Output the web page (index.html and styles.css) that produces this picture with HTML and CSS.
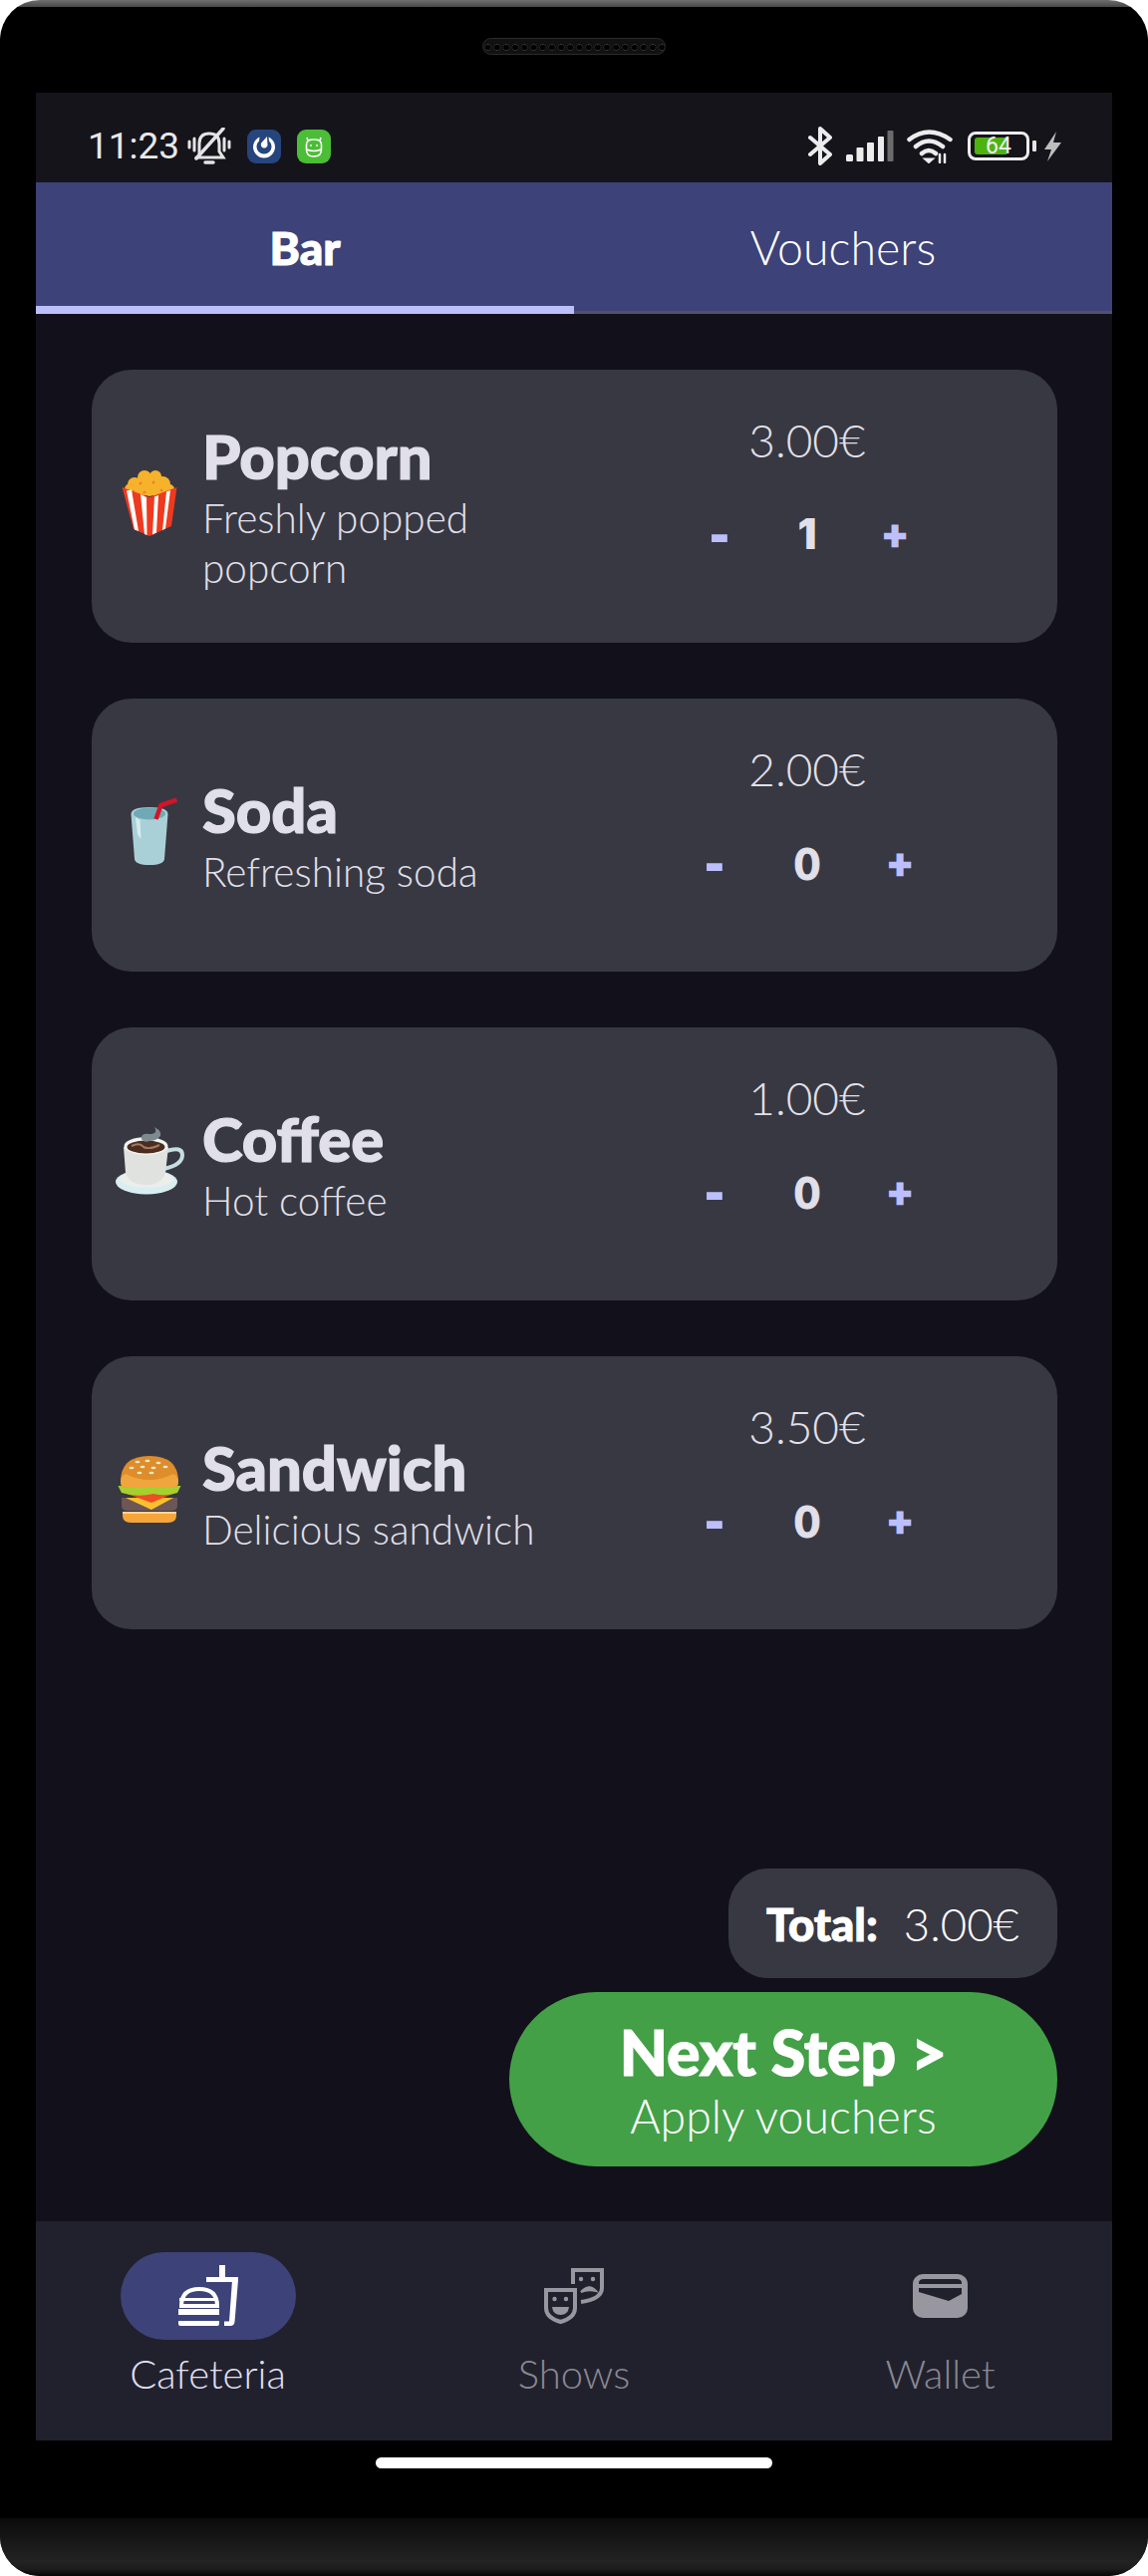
FILE: index.html
```html
<!DOCTYPE html>
<html lang="en">
<head>
<meta charset="utf-8">
<title>Cafeteria</title>
<link rel="stylesheet" href="styles.css">
</head>
<body>
<div class="device">
  <div class="bezel-top"><div class="speaker"></div></div>
  <div class="screen">
    <div class="status">
      <span class="time">11:23</span>
      <svg class="ic-bell" viewBox="0 0 44 38" fill="none" stroke="#e4e4e4" stroke-linecap="round" stroke-width="3"><path d="M12 28V16Q12 6 22 6Q32 6 32 16V24L36 30H9"/><path d="M9 31L36 1" stroke-width="3.5"/><path d="M2 14V20M7 11V23M37 11V23M42 14V20"/><path d="M18 35H26" stroke-width="3.5"/></svg>
      <svg class="ic-app ic-matter" viewBox="0 0 34 34"><rect width="34" height="34" rx="9" fill="#26457d"/><path d="M12.5 7.5A11 11 0 1 0 21.5 7.5L22 11.5A7.5 7.5 0 1 1 12 11.5Z" fill="#fff"/><path d="M20 7L20.5 16A3.4 3.4 0 1 1 14.6 13Z" fill="#fff"/></svg>
      <svg class="ic-app ic-green" viewBox="0 0 34 34"><rect width="34" height="34" rx="9" fill="#4cbd36"/><g fill="none" stroke="#fff" stroke-width="1.6"><path d="M9.5 15Q9.500 10 17 10Q24.500 10 24.500 15V20Q24.500 27 17 27Q9.500 27 9.500 20Z"/><path d="M9.500 20Q17 23 24.500 20M11 11L10 8M23 11L24 8"/></g><circle cx="14" cy="16" r="1" fill="#fff"/><circle cx="20" cy="16" r="1" fill="#fff"/></svg>
      <span class="status-space"></span>
      <svg class="ic-bt" viewBox="0 0 24 39" fill="none" stroke="#ececec" stroke-width="4" stroke-linejoin="round" stroke-linecap="round"><path d="M2 11L22 28L12 37V2L22 11L2 28"/></svg>
      <svg class="ic-signal" viewBox="0 0 48 31"><rect x="0" y="24" width="7" height="7" rx="1.500" fill="#ececec"/><rect x="10.500" y="17" width="7" height="14" rx="1" fill="#ececec"/><rect x="21" y="12" width="7" height="19" rx="1" fill="#ececec"/><rect x="32" y="6" width="6" height="25" rx="1" fill="#ececec"/><rect x="41.500" y="0" width="6" height="31" rx="1" fill="#6b6b6b"/></svg>
      <svg class="ic-wifi" viewBox="0 0 46 35" fill="none" stroke="#ececec" stroke-width="4.500" stroke-linecap="round"><path d="M2.500 11Q22 -4 43.500 11M9 18Q22 7 36 18M15 25Q22 19 29 25"/><path d="M22 34L18 30.500H26Z" fill="#ececec" stroke-width="2"/><path d="M33 26V34M38 26V34" stroke-width="2.500"/></svg>
      <div class="battery">
        <span class="battery-fill"></span>
        <span class="battery-num">64</span>
      </div>
      <span class="battery-tip"></span>
      <svg class="ic-bolt" viewBox="0 0 19 30"><path d="M13 0L1 18H8L4 30L18 11H10Z" fill="#bdbdbd"/></svg>
    </div>
    <div class="tabs">
      <div class="tab tab-active">Bar</div>
      <div class="tab">Vouchers</div>
    </div>
    <main class="main">
      <section class="card">
        <div class="emoji">
          <svg viewBox="0 0 72 68">
            <g fill="#f7b22c"><circle cx="21" cy="15" r="7"/><circle cx="31" cy="8" r="7"/><circle cx="42" cy="7" r="6"/><circle cx="49" cy="15" r="8"/><circle cx="36" cy="17" r="10"/><circle cx="17" cy="20" r="6"/><circle cx="56" cy="20" r="5"/><circle cx="26" cy="22" r="7"/><circle cx="46" cy="23" r="7"/></g>
            <g fill="#e8862a"><circle cx="27" cy="14" r="1.500"/><circle cx="40" cy="13" r="1.500"/><circle cx="48" cy="21" r="1.500"/><circle cx="31" cy="23" r="1.500"/><circle cx="20" cy="22" r="1.200"/></g>
            <path d="M8.500 18L36 28L63.500 18L58 57L36 67L20 60Z" fill="#ee3a1f"/>
            <path d="M13 21.500L18 20.500L25 62L21 60.500ZM27 25L33 28L33.500 66L31 65ZM41 27.500L45 26L43 63.500L39 65.500ZM53 22.500L57 21L52 59.500L49 61Z" fill="#fff"/>
          </svg>
        </div>
        <div class="info">
          <h2 class="name">Popcorn</h2>
          <p class="desc">Freshly popped popcorn</p>
        </div>
        <div class="side">
          <div class="price">3.00€</div>
          <div class="qty-row">
            <span class="step step-minus">-</span><span class="qty qty-one">1</span><span class="step step-plus">+</span>
          </div>
        </div>
      </section>
      <section class="card">
        <div class="emoji">
          <svg viewBox="0 0 72 68">
            <path d="M17.500 16Q17.500 9 36 9Q54.500 9 54.500 16L51 61Q50 67 36 67Q22 67 21 61Z" fill="#a9d0d7"/>
            <ellipse cx="36" cy="15.500" rx="16" ry="6" fill="#70a9b6"/>
            <path d="M22 19Q25 21 26.500 22L27.500 41Q25 38 24 36Z" fill="#d6ecef"/>
            <path d="M42.500 21L47.500 7L63.500 1.500" fill="none" stroke="#d21429" stroke-width="4.500"/>
          </svg>
        </div>
        <div class="info">
          <h2 class="name">Soda</h2>
          <p class="desc">Refreshing soda</p>
        </div>
        <div class="side">
          <div class="price">2.00€</div>
          <div class="qty-row">
            <span class="step step-minus">-</span><span class="qty">0</span><span class="step step-plus">+</span>
          </div>
        </div>
      </section>
      <section class="card">
        <div class="emoji">
          <svg viewBox="0 0 72 68">
            <ellipse cx="33" cy="55" rx="31" ry="12.500" fill="#d9eef0"/>
            <ellipse cx="33" cy="52.500" rx="27" ry="8" fill="#eceeec"/>
            <path d="M53 24Q69 19 69 28Q69 38 50 42" fill="none" stroke="#c5dfe1" stroke-width="4"/>
            <path d="M10 20H55L52 46Q48 58 33 58Q16 58 12 46Z" fill="#e0e2e0"/>
            <ellipse cx="32.500" cy="19" rx="22" ry="9" fill="#f1f3f1"/>
            <ellipse cx="32.500" cy="20" rx="19" ry="6.500" fill="#4b2c20"/>
            <path d="M18 19Q26 15 30 20Q36 23 46 18" fill="none" stroke="#a5795f" stroke-width="2"/>
            <path d="M28 12Q27 6 36 7Q45 7 41 0Q50 5 46 10Q42 14 36 14Q30 16 28 12Z" fill="#7e8a8d"/>
          </svg>
        </div>
        <div class="info">
          <h2 class="name">Coffee</h2>
          <p class="desc">Hot coffee</p>
        </div>
        <div class="side">
          <div class="price">1.00€</div>
          <div class="qty-row">
            <span class="step step-minus">-</span><span class="qty">0</span><span class="step step-plus">+</span>
          </div>
        </div>
      </section>
      <section class="card">
        <div class="emoji">
          <svg viewBox="0 0 72 68">
            <path d="M9 56H63V60Q63 67 54 67H18Q9 67 9 60Z" fill="#f5a53a"/>
            <path d="M9 57H63" stroke="#fbd49a" stroke-width="2"/>
            <path d="M8 42H64V50Q64 55 58 55H14Q8 55 8 50Z" fill="#6d5656"/>
            <path d="M12 42H60L38 54Z" fill="#fbc02d"/>
            <path d="M8 36H64L38 47Z" fill="#ef4d23"/>
            <path d="M4.500 30L67.500 30L64 37Q52 41 40 38Q24 42 8 37Z" fill="#a5d02e"/>
            <path d="M7 26Q7 0 36 0Q65 0 65 26Q65 32 58 32H14Q7 32 7 26Z" fill="#dd8d2b"/>
            <path d="M7 26Q7 20 12 18Q36 30 60 18Q65 20 65 26Q65 32 58 32H14Q7 32 7 26Z" fill="#f0a63c"/>
            <g fill="#f5e7c4"><ellipse cx="24" cy="6" rx="2.500" ry="1.300"/><ellipse cx="34" cy="5" rx="2.500" ry="1.300"/><ellipse cx="45" cy="7" rx="2.500" ry="1.300"/><ellipse cx="18" cy="12" rx="2.500" ry="1.300"/><ellipse cx="29" cy="11" rx="2.500" ry="1.300"/><ellipse cx="40" cy="12" rx="2.500" ry="1.300"/><ellipse cx="52" cy="11" rx="2.500" ry="1.300"/><ellipse cx="26" cy="17" rx="2.500" ry="1.300"/><ellipse cx="38" cy="17" rx="2.500" ry="1.300"/></g>
          </svg>
        </div>
        <div class="info">
          <h2 class="name">Sandwich</h2>
          <p class="desc">Delicious sandwich</p>
        </div>
        <div class="side">
          <div class="price">3.50€</div>
          <div class="qty-row">
            <span class="step step-minus">-</span><span class="qty">0</span><span class="step step-plus">+</span>
          </div>
        </div>
      </section>
      <div class="footer">
        <div class="total"><strong class="total-label">Total:</strong><span class="total-value">3.00€</span></div>
        <button class="next" type="button">
          <span class="next-title">Next Step &gt;</span>
          <span class="next-sub">Apply vouchers</span>
        </button>
      </div>
    </main>
    <nav class="nav">
      <div class="nav-item nav-active">
        <div class="nav-icon">
          <svg class="ic-cafe" viewBox="0 0 60 62" fill="#fff">
            <rect x="41" y="0" width="6" height="13"/><rect x="28" y="12" width="32" height="5"/>
            <path d="M54 15H60L56.500 57Q56 61 52 61H46V56.500H51Z"/>
            <path d="M3 41Q3 24 21 24Q39 24 39 41Z" fill="none" stroke="#fff" stroke-width="4"/>
            <rect x="1" y="33" width="39" height="3"/>
            <rect x="0" y="44" width="41" height="6"/><path d="M0 56H41V59Q41 61 39 61H2Q0 61 0 59Z"/>
          </svg>
        </div>
        <span class="nav-label">Cafeteria</span>
      </div>
      <div class="nav-item">
        <div class="nav-icon">
          <svg class="ic-masks" viewBox="0 0 60 56" fill="#98979f">
            <path d="M2 22H31V40Q31 50 16.500 54Q2 50 2 40Z" fill="none" stroke="#98979f" stroke-width="4"/>
            <circle cx="10.500" cy="31" r="2.200"/><circle cx="22" cy="31" r="2.200"/>
            <path d="M8 39H25Q24 47 16.500 47Q9 47 8 39Z"/>
            <path d="M29 16V2H58V20Q58 31 37 34" fill="none" stroke="#98979f" stroke-width="4"/>
            <circle cx="37" cy="11" r="2.200"/><circle cx="49" cy="11" r="2.200"/>
            <path d="M37 24Q45 15 52 23Q44 21 37 24Z" stroke="#98979f" stroke-width="2"/>
          </svg>
        </div>
        <span class="nav-label">Shows</span>
      </div>
      <div class="nav-item">
        <div class="nav-icon">
          <svg class="ic-wallet" viewBox="0 0 55 44">
            <rect width="55" height="44" rx="10" fill="#98979f"/>
            <path d="M6 10V9Q6 5 11 5H44Q49 5 49 9V10Z" fill="#21212d"/>
            <path d="M6 14H49V20L36 27L6 18Z" fill="#21212d"/>
          </svg>
        </div>
        <span class="nav-label">Wallet</span>
      </div>
    </nav>
  </div>
  <div class="bezel-nav"><div class="home-bar"></div></div>
  <div class="bezel-bottom"></div>
</div>
</body>
</html>
```
FILE: styles.css
```css
* { box-sizing: border-box; }
html, body { margin: 0; padding: 0; background: #fff; }
body { font-family: "Lato", "Liberation Sans", sans-serif; }

.device {
  width: 1152px;
  height: 2585px;
  display: flex;
  flex-direction: column;
  padding-top: 7px;
  border-radius: 40px;
  overflow: hidden;
  background: #000;
  background-image: linear-gradient(#6e6e6e, #474747 7px, #000 7px);
}
.bezel-top {
  height: 86px;
  flex: none;
  background: #000;
  border-radius: 34px 34px 0 0;
  display: flex;
  justify-content: center;
  padding-top: 31px;
}
.speaker {
  width: 184px;
  height: 17px;
  border-radius: 9px;
  border: 1px solid #2c2c2c;
  background-image: radial-gradient(circle, #000 2.500px, #3a3a3a 3px, #111 3.500px);
  background-size: 9.200px 17px;
}
.screen {
  flex: none;
  height: 2356px;
  margin: 0 36px;
  display: flex;
  flex-direction: column;
  background: #12111b;
}
.bezel-nav {
  flex: none;
  height: 78px;
  padding-top: 17px;
  display: flex;
  justify-content: center;
}
.home-bar { width: 398px; height: 11px; border-radius: 6px; background: #fff; }
.bezel-bottom {
  flex: 1;
  background: linear-gradient(#0b0b0b, #232323 75%, #1c1c1c 88%, #060606);
}

/* status bar */
.status {
  flex: none;
  height: 90px;
  padding: 17px 50px 0 52px;
  background: #15141b;
  display: flex;
  align-items: center;
  color: #e8e8e8;
}
.time { font-family: "Roboto", sans-serif; font-size: 37px; width: 100px; line-height: 1; }
.ic-bell { width: 44px; height: 38px; }
.ic-app { width: 34px; height: 34px; margin-left: 16px; }
.ic-green { margin-left: 16px; }
.status-space { flex: 1; }
.ic-bt { width: 24px; height: 39px; }
.ic-signal { width: 48px; height: 31px; margin-left: 14px; }
.ic-wifi { width: 46px; height: 35px; margin-left: 13px; }
.battery {
  position: relative;
  width: 62px;
  height: 29px;
  margin-left: 15px;
  border: 3px solid #ececec;
  border-radius: 8px;
  display: flex;
  align-items: center;
  justify-content: center;
}
.battery-fill {
  position: absolute;
  left: 4px;
  top: 3px;
  width: 32px;
  height: 17px;
  border-radius: 3px 0 0 3px;
  background: #4fb30e;
}
.battery-num {
  position: relative;
  font-family: "Roboto", sans-serif;
  font-size: 23px;
  line-height: 1;
  color: #eef;
}
.battery-tip { width: 4px; height: 11px; margin-left: 3px; border-radius: 1px; background: #e4e4e4; }
.ic-bolt { width: 19px; height: 30px; margin-left: 7px; }

/* tabs */
.tabs { flex: none; display: flex; height: 132px; background: #3d4278; color: #fff; }
.tab {
  flex: 1;
  display: flex;
  align-items: center;
  justify-content: center;
  padding-top: 1px;
  font-size: 46.500px;
  font-weight: 300;
  border-bottom: 3px solid #50516f;
}
.tab-active {
  font-size: 46px;
  font-weight: 900;
  -webkit-text-stroke: 1px #fff;
  border-bottom: 8px solid #bcbffb;
  padding-top: 6px;
}

/* main */
.main {
  flex: 1;
  display: flex;
  flex-direction: column;
  gap: 56px;
  padding: 56px 55px 55px 56px;
}
.card {
  flex: none;
  height: 274px;
  display: flex;
  align-items: center;
  padding-right: 6px;
  border-radius: 40px;
  background: #383842;
  color: #e1e0ea;
}
.emoji { flex: none; width: 111px; padding-left: 5px; display: flex; justify-content: center; margin-bottom: 6px; }
.emoji svg { width: 72px; height: 68px; display: block; }
.info { flex: none; width: 362px; }
.name { margin: 0 0 3px; font-size: 61.500px; line-height: 70px; font-weight: 900; -webkit-text-stroke: 1.200px #e1e0ea; }
.desc { margin: 0; font-size: 40.500px; line-height: 50px; font-weight: 300; }
.side { flex: 1; align-self: flex-start; padding-top: 44px; display: flex; flex-direction: column; align-items: center; gap: 36.500px; }
.price { font-size: 46px; line-height: 54px; font-weight: 300; }
.qty-row { display: flex; align-items: center; height: 60px; }
.step { width: 156px; text-align: center; font-weight: 900; color: #bcbffb; line-height: 60px; }
.step-minus { font-size: 52px; -webkit-text-stroke: 2px #bcbffb; }
.step-plus { font-size: 40px; -webkit-text-stroke: 2.500px #bcbffb; }
.qty { width: 30px; text-align: center; font-size: 44px; font-weight: 900; line-height: 60px; -webkit-text-stroke: 1px #e1e0ea; }
.qty-one { width: 20px; font-family: "Inter", "Lato", sans-serif; font-size: 42px; -webkit-text-stroke: 0; }

/* footer */
.footer { margin-top: auto; display: flex; flex-direction: column; align-items: flex-end; gap: 14px; }
.total {
  height: 110px;
  width: 330px;
  padding-left: 38px;
  border-radius: 40px;
  display: flex;
  align-items: center;
  gap: 26px;
  background: #383842;
  color: #fff;
  font-size: 45.500px;
}
.total-label { font-weight: 900; -webkit-text-stroke: 1px #fff; }
.total-value { font-weight: 300; }
.next {
  width: 550px;
  height: 175px;
  border: 0;
  border-radius: 88px;
  background: #43a047;
  color: #fff;
  font-family: inherit;
  display: flex;
  flex-direction: column;
  align-items: center;
  justify-content: center;
  padding: 2px 0 0;
}
.next-title { font-size: 62.500px; line-height: 70px; font-weight: 900; -webkit-text-stroke: 1.200px #fff; }
.next-sub { font-size: 46.500px; line-height: 58px; font-weight: 300; }

/* nav */
.nav {
  flex: none;
  height: 220px;
  display: flex;
  justify-content: space-between;
  padding: 31px 84.500px 0;
  background: #21212d;
}
.nav-item { width: 176px; display: flex; flex-direction: column; align-items: center; color: #8a8992; }
.nav-icon { width: 176px; height: 88px; border-radius: 44px; display: flex; align-items: center; justify-content: center; }
.nav-active { color: #e1e0f5; }
.nav-active .nav-icon { background: #3d4278; }
.ic-cafe { width: 60px; height: 62px; }
.ic-masks { width: 60px; height: 56px; }
.ic-wallet { width: 55px; height: 44px; }
.nav-label { margin-top: 10px; font-size: 40px; line-height: 48px; font-weight: 300; white-space: nowrap; }
```
